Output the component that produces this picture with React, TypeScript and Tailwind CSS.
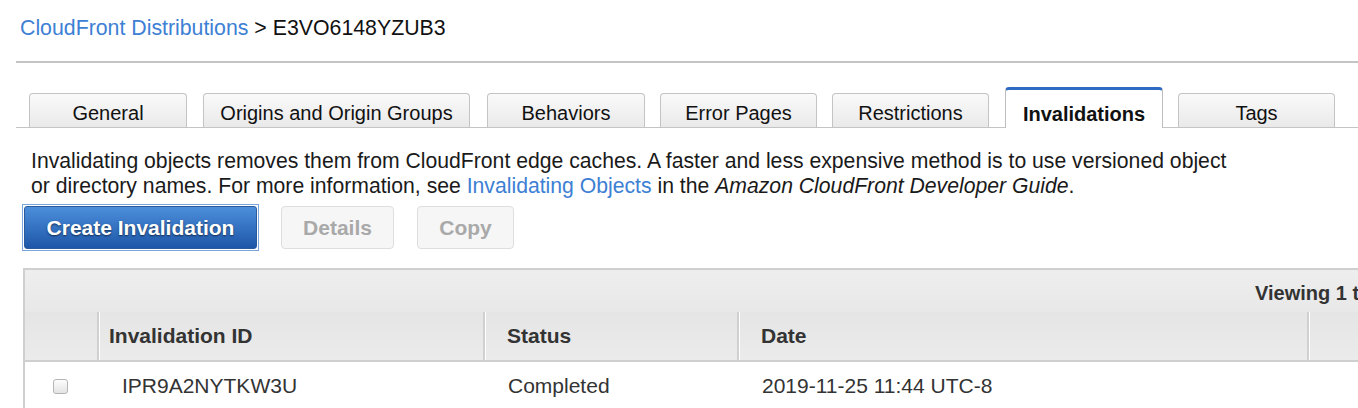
import React from 'react';

const tabs = [
  { label: 'General', w: 'w-[158px]', ml: 'ml-0' },
  { label: 'Origins and Origin Groups', w: 'w-[267px]', ml: 'ml-[16px]' },
  { label: 'Behaviors', w: 'w-[158px]', ml: 'ml-[17px]' },
  { label: 'Error Pages', w: 'w-[157px]', ml: 'ml-[15px]' },
  { label: 'Restrictions', w: 'w-[157px]', ml: 'ml-[15px]' },
  { label: 'Invalidations', w: 'w-[158px]', ml: 'ml-[16px]', active: true },
  { label: 'Tags', w: 'w-[157px]', ml: 'ml-[15px]' },
];

const Tab = ({ label, w, ml, active }: { label: string; w: string; ml: string; active?: boolean }) => {
  if (active) {
    return (
      <div
        className={`${w} ${ml} h-[41px] -mb-px flex items-center justify-center rounded-t-[4px] border border-b-0 border-[#bdbdbd] border-t-[3px] border-t-[#2f6bc4] bg-white pt-[9px] text-[20px] font-bold text-[#111]`}
      >
        {label}
      </div>
    );
  }
  return (
    <div
      className={`${w} ${ml} h-[34px] flex items-center justify-center rounded-t-[4px] border border-b-0 border-[#c4c4c4] bg-gradient-to-b from-[#fafafa] to-[#e9e9e9] pt-[4px] text-[20px] text-[#111]`}
    >
      {label}
    </div>
  );
};

export default function App() {
  return (
    <div className="w-[1358px] h-[408px] overflow-hidden bg-white font-['Liberation_Sans',Arial,sans-serif] text-[#222]">
      {/* breadcrumb */}
      <div className="pl-[20px] pt-[16px] h-[61px] text-[21.3px] leading-[24px]">
        <span className="text-[#3d80d4]">CloudFront Distributions</span>
        <span className="text-[#111]"> &gt; E3VO6148YZUB3</span>
      </div>
      <div className="ml-[16px] h-[2px] bg-[#c4c4c4]" />

      {/* tabs */}
      <div className="ml-[16px] mt-[24px] flex items-end border-b border-[#c4c4c4] pl-[13px]">
        {tabs.map((t) => (
          <Tab key={t.label} {...t} />
        ))}
      </div>

      {/* description */}
      <div className="pl-[31px] pt-[20px] text-[21.2px] leading-[25px] text-[#1a1a1a]">
        <p>
          Invalidating objects removes them from CloudFront edge caches. A faster and less expensive method is to use versioned object
          <br />
          or directory names. For more information, see <span className="text-[#3d80d4]">Invalidating Objects</span> in the{' '}
          <i>Amazon CloudFront Developer Guide</i>.
        </p>
      </div>

      {/* buttons */}
      <div className="flex items-center pl-[22px] pt-[6px] gap-[22px]">
        <div className="border border-[#79a7dc] p-[1px]">
          <button className="h-[43px] w-[233px] rounded-[3px] border border-[#2a5a9e] bg-gradient-to-b from-[#4d8fdb] to-[#1d56a8] text-[21px] font-bold text-white [text-shadow:0_1px_2px_rgba(0,0,0,0.6)]">
            Create Invalidation
          </button>
        </div>
        <button className="h-[43px] w-[113px] rounded-[4px] border border-[#dedede] bg-[#f6f6f6] text-[21px] font-bold text-[#a9a9a9]">
          Details
        </button>
        <button className="h-[43px] w-[97px] ml-[1px] rounded-[4px] border border-[#dedede] bg-[#f6f6f6] text-[21px] font-bold text-[#a9a9a9]">
          Copy
        </button>
      </div>

      {/* table */}
      <div className="ml-[23px] mt-[17px] w-[1500px] border-t-2 border-l-2 border-[#cfcfcf]">
        <div className="h-[42px] flex items-center bg-gradient-to-b from-[#eeeeee] to-[#e8e8e8] pl-[1230px] pt-[3px] text-[20px] font-bold text-[#333] whitespace-nowrap">
          Viewing 1 to 1 of 1 Items
        </div>
        <div className="flex h-[50px] border-b-2 border-[#cfcfcf] bg-gradient-to-b from-[#e5e5e5] to-[#ebebeb] text-[21px] font-bold text-[#333]">
          <div className="w-[72px]" />
          <div className="w-[386px] flex items-center pl-[10px] border-l-2 border-l-[#d0d0d0] shadow-[inset_1px_0_0_#fff]">Invalidation ID</div>
          <div className="w-[254px] flex items-center pl-[22px] border-l-2 border-l-[#d0d0d0] shadow-[inset_1px_0_0_#fff]">Status</div>
          <div className="w-[570px] flex items-center pl-[22px] border-l-2 border-l-[#d0d0d0] shadow-[inset_1px_0_0_#fff]">Date</div>
          <div className="flex-1 border-l-2 border-l-[#d0d0d0] shadow-[inset_1px_0_0_#fff]" />
        </div>
        <div className="flex h-[48px] items-center text-[21px] text-[#333]">
          <div className="w-[74px] pl-[28px]">
            <span className="block h-[15px] w-[15px] rounded-[3px] border border-[#b5b5b5] bg-gradient-to-b from-[#fdfdfd] to-[#e4e4e4]" />
          </div>
          <div className="w-[386px] pl-[23px]">IPR9A2NYTKW3U</div>
          <div className="w-[254px] pl-[23px]">Completed</div>
          <div className="w-[570px] pl-[23px]">2019-11-25 11:44 UTC-8</div>
        </div>
      </div>
    </div>
  );
}
